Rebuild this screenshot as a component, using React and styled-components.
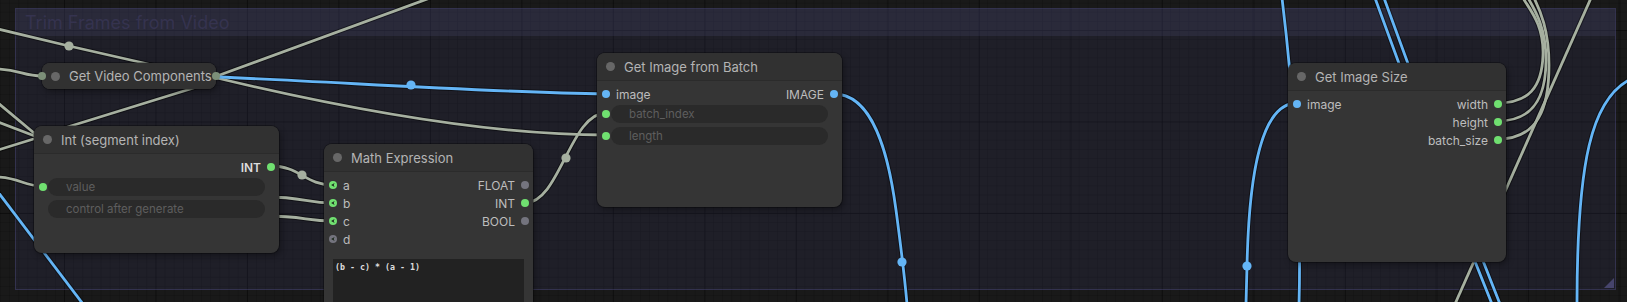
import React from 'react'
import styled, { createGlobalStyle } from 'styled-components'

const GRAY = '#a6b0a0'
const BLUE = '#64b5f6'
const GREEN = '#70e070'
const DIM = '#74747e'

const GlobalStyle = createGlobalStyle`
  html, body {
    margin: 0;
    padding: 0;
    background: #191919;
  }
  body {
    font-family: Inter, "Noto Sans", sans-serif;
  }
`

const Canvas = styled.div`
  position: relative;
  width: 1627px;
  height: 302px;
  overflow: hidden;
  background-color: #191919;
  background-image:
    linear-gradient(90deg, rgba(0,0,0,.35) 1px, transparent 1px),
    linear-gradient(rgba(0,0,0,.35) 1px, transparent 1px),
    linear-gradient(90deg, rgba(0,0,0,.14) 1px, transparent 1px),
    linear-gradient(rgba(0,0,0,.14) 1px, transparent 1px);
  background-size: 91.5px 91.5px, 91.5px 91.5px, 9.15px 9.15px, 9.15px 9.15px;
  background-position: 64px 0, 0 30px, 64px 0, 0 30px;
`

const Group = styled.div`
  position: absolute;
  left: 15px;
  top: 8px;
  width: 1601px;
  height: 282px;
  box-sizing: border-box;
  background: rgba(70, 65, 130, .15);
  border: 1px solid rgba(90, 86, 150, .35);
`

const GroupTitle = styled.div`
  height: 27px;
  display: flex;
  align-items: center;
  padding-left: 9px;
  background: rgba(90, 88, 140, .19);
  color: #35334f;
  font-size: 18px;
`

const GroupResize = styled.div`
  position: absolute;
  right: 1px;
  bottom: 1px;
  width: 0;
  height: 0;
  border-left: 10px solid transparent;
  border-bottom: 10px solid #46446c;
`

const Wires = styled.svg`
  position: absolute;
  left: 0;
  top: 0;
`

const Node = styled.div`
  position: absolute;
  left: ${p => p.$x}px;
  top: ${p => p.$y}px;
  width: ${p => p.$w}px;
  height: ${p => p.$h}px;
  display: flex;
  flex-direction: column;
  background: #353535;
  border-radius: 8px;
  box-shadow: 0 0 0 1px rgba(0,0,0,.3), 2px 3px 6px rgba(0,0,0,.35);
  overflow: hidden;
`

const CollapsedNode = styled(Node)`
  overflow: visible;
  &::before, &::after {
    content: '';
    position: absolute;
    top: 9px;
    width: 8px;
    height: 8px;
    border-radius: 50%;
    background: #7c8f78;
  }
  &::before { left: -4px; }
  &::after { right: -4px; }
`

const Title = styled.div`
  flex: 0 0 ${p => (p.$collapsed ? 26 : 28)}px;
  display: flex;
  align-items: center;
  gap: 9px;
  padding-left: 9px;
  box-sizing: border-box;
  background: #313131;
  border-bottom: ${p => (p.$collapsed ? 'none' : '1px solid #2b2b2b')};
  border-radius: ${p => (p.$collapsed ? '8px' : '8px 8px 0 0')};
  color: #b4b4b4;
  font-size: 13px;
  white-space: nowrap;
`

const TitleDot = styled.span`
  width: 9px;
  height: 9px;
  border-radius: 50%;
  background: #676767;
`

const Body = styled.div`
  display: flex;
  flex-direction: column;
  padding-top: 4px;
  flex: 1;
  min-height: 0;
`

const SlotRow = styled.div`
  height: 18px;
  flex: 0 0 18px;
  display: flex;
  align-items: center;
  justify-content: space-between;
  padding: 0 4px 0 5px;
`

const Slot = styled.div`
  display: flex;
  align-items: center;
  gap: 6px;
  font-size: 12px;
  color: ${p => (p.$strong ? '#dcdcdc' : '#bdbdbd')};
  font-weight: ${p => (p.$strong ? 600 : 400)};
`

const Dot = styled.span`
  width: 8px;
  height: 8px;
  flex: 0 0 8px;
  border-radius: 50%;
  background: ${p => p.$c};
`

const DotSpace = styled.span`
  width: 8px;
  flex: 0 0 8px;
`

const WidgetRow = styled.div`
  height: 18px;
  flex: 0 0 18px;
  display: flex;
  align-items: center;
  gap: 1px;
  padding: 0 14px 0 5px;
  margin-top: 2px;
  & + & {
    margin-top: 4px;
  }
`

const Widget = styled.div`
  flex: 1;
  height: 18px;
  display: flex;
  align-items: center;
  padding-left: 18px;
  border-radius: 9px;
  background: #2a2a2a;
  color: #5e5e5e;
  font-size: 11.5px;
`

const CodeBox = styled.div`
  margin: 11px 9px 0;
  flex: 1;
  padding: 3px 2px;
  background: #222222;
  color: #dedede;
  font-family: "DejaVu Sans Mono", "Liberation Mono", monospace;
  font-weight: bold;
  font-size: 8.3px;
  white-space: pre;
`

function ArrowDot({ color }) {
  return (
    <svg width="8" height="8" viewBox="0 0 8 8" style={{ flex: '0 0 8px' }}>
      <circle cx="4" cy="4" r="4" fill={color} />
      <path d="M5.6 1.9 L2.1 4 L5.6 6.1 L4.7 4 Z" fill="#1d2a1d" />
    </svg>
  )
}

function Input({ label, color, arrow }) {
  return (
    <Slot>
      {arrow ? <ArrowDot color={color} /> : <Dot $c={color} />}
      {label}
    </Slot>
  )
}

function Output({ label, color, strong }) {
  return (
    <Slot $strong={strong}>
      {label}
      <Dot $c={color} />
    </Slot>
  )
}

const grayWires = [
  'M-2,29 L69,46 L170,69',
  'M-2,69 C20,70 24,76 42,76',
  'M-2,103 L40,138',
  'M-2,122 L40,138',
  'M-2,150 L40,137',
  'M45,134 L200,86',
  'M217,76 L430,-2',
  'M217,78 C330,105 480,135 606,135',
  'M271,166 C300,166 305,185 333,185',
  'M265,197 C305,197 305,203 333,203',
  'M265,216 C305,216 305,221 333,221',
  'M525,203 C560,203 570,113 606,113',
  'M-2,177 C20,178 24,186 42,186',
  'M1498,103 C1528,103 1542,88 1543,55 C1544,25 1530,10 1523,-2',
  'M1498,121 C1533,121 1546,98 1546,60 C1546,28 1535,10 1528,-2',
  'M1498,139 C1538,139 1549,108 1549,65 C1549,30 1540,10 1534,-2',
  'M1591,-2 L1455,304',
]

const blueWires = [
  'M217,77 C340,82 480,92 606,94',
  'M834,94 C872,94 888,150 896,210 C900,240 904,270 907,304',
  'M1297,103 C1262,103 1249,170 1247,266 L1246,304',
  'M1282,-2 C1292,80 1302,200 1299,304',
  'M1375,-2 Q1430,150 1492,304',
  'M1384,-2 Q1439,150 1500,304',
  'M1629,80 C1592,100 1577,160 1577,304',
  'M-2,192 L83,304',
]

const reroutes = [
  [69, 46, GRAY],
  [302, 175, GRAY],
  [566, 158, GRAY],
  [411, 85, BLUE],
  [902, 262, BLUE],
  [1247, 266, BLUE],
]

function Links() {
  const all = [
    ...grayWires.map(d => [d, GRAY]),
    ...blueWires.map(d => [d, BLUE]),
  ]
  return (
    <Wires width="1627" height="302" viewBox="0 0 1627 302">
      {all.map(([d], i) => (
        <path key={'s' + i} d={d} fill="none" stroke="rgba(0,0,0,.45)" strokeWidth="4.8" />
      ))}
      {all.map(([d, c], i) => (
        <path key={'l' + i} d={d} fill="none" stroke={c} strokeWidth="2.8" />
      ))}
      {reroutes.map(([x, y, c], i) => (
        <circle key={'r' + i} cx={x} cy={y} r="4.6" fill={c} />
      ))}
    </Wires>
  )
}

export default function App() {
  return (
    <Canvas>
      <GlobalStyle />
      <Group>
        <GroupTitle>Trim Frames from Video</GroupTitle>
        <GroupResize />
      </Group>

      <Links />

      <CollapsedNode $x={42} $y={63} $w={174} $h={26}>
        <Title $collapsed>
          <TitleDot />
          Get Video Components
        </Title>
      </CollapsedNode>

      <Node $x={34} $y={126} $w={245} $h={127}>
        <Title>
          <TitleDot />
          Int (segment index)
        </Title>
        <Body>
          <SlotRow>
            <span />
            <Output label="INT" color={GREEN} strong />
          </SlotRow>
          <WidgetRow>
            <Dot $c={GREEN} />
            <Widget>value</Widget>
          </WidgetRow>
          <WidgetRow>
            <DotSpace />
            <Widget>control after generate</Widget>
          </WidgetRow>
        </Body>
      </Node>

      <Node $x={324} $y={144} $w={209} $h={200}>
        <Title>
          <TitleDot />
          Math Expression
        </Title>
        <Body>
          <SlotRow>
            <Input label="a" color={GREEN} arrow />
            <Output label="FLOAT" color={DIM} />
          </SlotRow>
          <SlotRow>
            <Input label="b" color={GREEN} arrow />
            <Output label="INT" color={GREEN} />
          </SlotRow>
          <SlotRow>
            <Input label="c" color={GREEN} arrow />
            <Output label="BOOL" color={DIM} />
          </SlotRow>
          <SlotRow>
            <Input label="d" color={DIM} arrow />
            <span />
          </SlotRow>
          <CodeBox>(b - c) * (a - 1)</CodeBox>
        </Body>
      </Node>

      <Node $x={597} $y={53} $w={245} $h={154}>
        <Title>
          <TitleDot />
          Get Image from Batch
        </Title>
        <Body>
          <SlotRow>
            <Input label="image" color={BLUE} />
            <Output label="IMAGE" color={BLUE} />
          </SlotRow>
          <WidgetRow>
            <Dot $c={GREEN} />
            <Widget>batch_index</Widget>
          </WidgetRow>
          <WidgetRow>
            <Dot $c={GREEN} />
            <Widget>length</Widget>
          </WidgetRow>
        </Body>
      </Node>

      <Node $x={1288} $y={63} $w={218} $h={199}>
        <Title>
          <TitleDot />
          Get Image Size
        </Title>
        <Body>
          <SlotRow>
            <Input label="image" color={BLUE} />
            <Output label="width" color={GREEN} />
          </SlotRow>
          <SlotRow>
            <span />
            <Output label="height" color={GREEN} />
          </SlotRow>
          <SlotRow>
            <span />
            <Output label="batch_size" color={GREEN} />
          </SlotRow>
        </Body>
      </Node>
    </Canvas>
  )
}
